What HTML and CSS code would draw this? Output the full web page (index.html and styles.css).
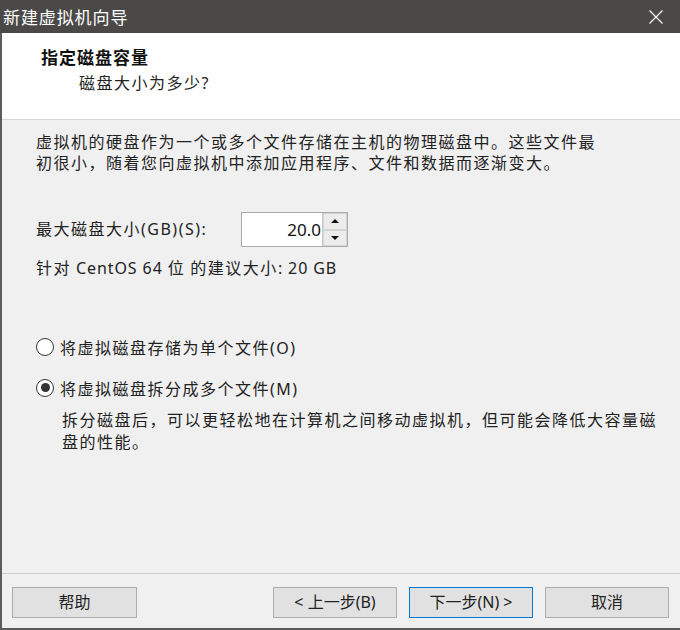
FILE: index.html
```html
<!DOCTYPE html>
<html lang="zh-CN">
<head>
<meta charset="utf-8">
<title>新建虚拟机向导</title>
<link rel="stylesheet" href="styles.css">
</head>
<body>
<div class="window">
  <div class="titlebar">
    <span class="title">新建虚拟机向导</span>
    <span class="close"><svg width="16" height="16" viewBox="0 0 16 16"><path d="M1.5 1.5 L14.5 14.5 M14.5 1.5 L1.5 14.5" stroke="#ffffff" stroke-width="1.2" fill="none"/></svg></span>
  </div>
  <div class="frame">
    <div class="header">
      <div class="h-title">指定磁盘容量</div>
      <div class="h-sub">磁盘大小为多少?</div>
    </div>
    <div class="content">
      <p class="desc">虚拟机的硬盘作为一个或多个文件存储在主机的物理磁盘中。这些文件最<br>初很小，随着您向虚拟机中添加应用程序、文件和数据而逐渐变大。</p>
      <div class="size-row">
        <span class="label">最大磁盘大小(GB)(S):</span>
        <div class="spin">
          <div class="spin-value">20.0</div>
          <div class="spin-btns">
            <div class="spin-btn"><span class="tri-up"></span></div>
            <div class="spin-btn"><span class="tri-down"></span></div>
          </div>
        </div>
      </div>
      <div class="recommend">针对<span class="lat"> CentOS 64 </span>位<span class="lat"> </span>的建议大小<span class="lat">: 20 GB</span></div>
      <div class="radio first"><span class="circle"></span><span>将虚拟磁盘存储为单个文件(O)</span></div>
      <div class="radio second"><span class="circle checked"></span><span>将虚拟磁盘拆分成多个文件(M)</span></div>
      <p class="radio-desc">拆分磁盘后，可以更轻松地在计算机之间移动虚拟机，但可能会降低大容量磁<br>盘的性能。</p>
    </div>
    <div class="footer">
      <button class="btn help">帮助</button>
      <div class="spacer"></div>
      <button class="btn">&lt; 上一步(B)</button>
      <button class="btn default">下一步(N) &gt;</button>
      <button class="btn">取消</button>
    </div>
  </div>
</div>
</body>
</html>
```

FILE: styles.css
```css
* { box-sizing: border-box; }
html, body { margin: 0; padding: 0; }
body {
  width: 680px;
  height: 630px;
  overflow: hidden;
  background: #f0f0f0;
  font-family: "Noto Sans", "Noto Sans CJK SC", sans-serif;
  color: #222;
}
.window {
  width: 680px;
  height: 630px;
  display: flex;
  flex-direction: column;
}
.titlebar {
  height: 33px;
  background: #4a4948;
  display: flex;
  align-items: center;
  justify-content: space-between;
  padding-left: 3px;
  padding-right: 16px;
  flex: none;
}
.title {
  color: #ffffff;
  font-size: 17px;
  letter-spacing: 0.9px;
  line-height: 33px;
  font-family: "Noto Sans CJK SC", sans-serif;
}
.close { display: flex; align-items: center; margin-top: 1px; }
.frame {
  flex: 1;
  display: flex;
  flex-direction: column;
  border-left: 2px solid #5c5c5c;
  border-bottom: 2px solid #5c5c5c;
}
.header {
  height: 87px;
  background: #ffffff;
  border-bottom: 1px solid #d6d6d6;
  padding: 13px 0 0 39px;
  flex: none;
}
.h-title {
  font-size: 17px;
  font-weight: bold;
  letter-spacing: 1px;
  line-height: 22px;
  color: #111;
  font-family: "Noto Sans CJK SC", sans-serif;
}
.h-sub {
  margin-top: 4px;
  margin-left: 38px;
  font-size: 16px;
  letter-spacing: 1.5px;
  line-height: 22px;
  color: #222;
}
.content {
  flex: 1;
  padding: 12px 0 0 34px;
  font-size: 16px;
  letter-spacing: 1.5px;
}
.desc {
  margin: 0;
  line-height: 21px;
  white-space: nowrap;
}
.size-row {
  margin-top: 38px;
  display: flex;
  align-items: center;
  height: 35px;
}
.label {
  width: 205px;
  line-height: 21px;
  white-space: nowrap;
}
.spin {
  display: flex;
  height: 35px;
  border: 1px solid #a9a9a9;
  background: #ffffff;
}
.spin-value {
  width: 80px;
  text-align: right;
  font-size: 17px;
  letter-spacing: 0;
  line-height: 33px;
  padding-right: 1px;
  color: #111;
}
.spin-btns {
  width: 25px;
  display: flex;
  flex-direction: column;
  background: #f0f0f0;
  border-left: 1px solid #c9c9c9;
}
.spin-btn {
  flex: 1;
  display: flex;
  align-items: center;
  justify-content: center;
  border: 1px solid #d4d4d4;
  background: #ececec;
}
.tri-up, .tri-down {
  width: 0;
  height: 0;
  border-left: 4px solid transparent;
  border-right: 4px solid transparent;
}
.tri-up { border-bottom: 4px solid #111; }
.tri-down { border-top: 4px solid #111; }
.recommend {
  margin-top: 11px;
  line-height: 21px;
  white-space: pre;
}
.lat { letter-spacing: 0.9px; }
.radio {
  display: flex;
  align-items: center;
  height: 21px;
  white-space: nowrap;
}
.radio.first { margin-top: 57px; }
.radio.second { margin-top: 20px; }
.circle {
  width: 18px;
  height: 18px;
  border: 1.5px solid #333;
  border-radius: 50%;
  background: #fff;
  margin-right: 6px;
  display: flex;
  align-items: center;
  justify-content: center;
  flex: none;
}
.circle.checked::after {
  content: "";
  width: 9px;
  height: 9px;
  border-radius: 50%;
  background: #333;
}
.radio-desc {
  margin: 11px 0 0 26px;
  line-height: 22px;
  white-space: nowrap;
}
.footer {
  height: 55px;
  border-top: 1px solid #cdcdcd;
  display: flex;
  align-items: flex-start;
  padding: 13px 0 0 10px;
  gap: 12px;
  flex: none;
}
.spacer { width: 112px; }
.btn {
  width: 124px;
  height: 31px;
  background: #e1e1e1;
  border: 1px solid #adadad;
  font-family: "Noto Sans", "Noto Sans CJK SC", sans-serif;
  font-size: 16px;
  color: #222;
  padding: 0;
  line-height: 29px;
}
.btn.help { width: 125px; }
.btn.default { border-color: #0078d7; }
```
